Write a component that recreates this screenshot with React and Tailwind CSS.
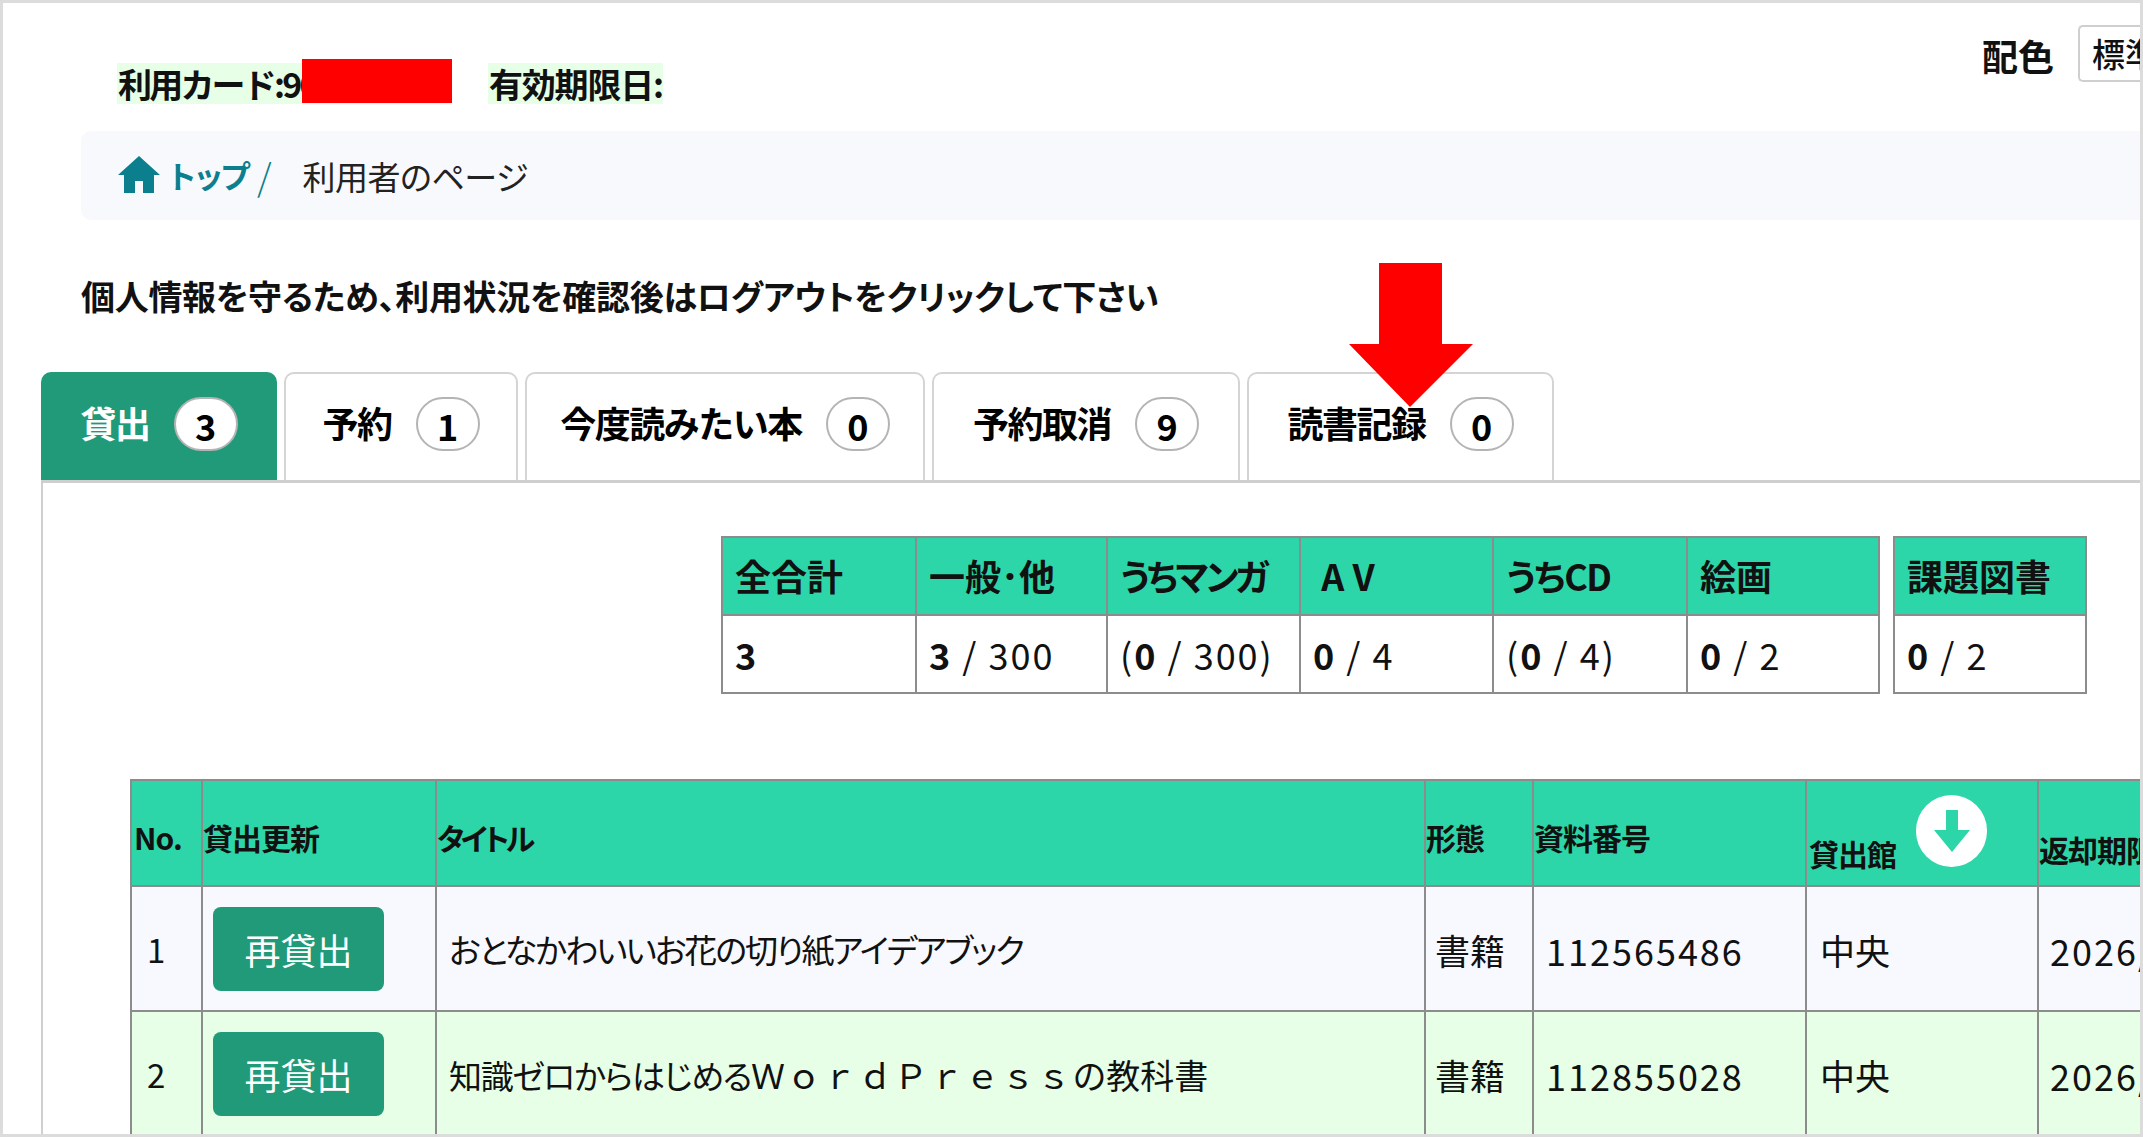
const font = { fontFamily: '"Noto Sans CJK JP", "Noto Sans", sans-serif' };

function Tab({ label, n, active, w }) {
  return (
    <div
      className={`flex h-[108px] items-center justify-center gap-[24px] rounded-t-[10px] border-[2px] border-b-0 pb-[10px] text-[36px] font-bold tracking-[-1.5px] ${w} ${
        active ? 'border-[#209a78] bg-[#209a78] text-white' : 'border-[#d4d4d4] bg-white text-black'
      }`}
    >
      <span>{label}</span>
      <span className="mt-[3px] flex h-[54px] w-[64px] items-center justify-center rounded-full border-[2px] border-[#b4b4b4] bg-white pt-[3px] text-[36px] tracking-normal text-black">
        {n}
      </span>
    </div>
  );
}

function Th({ children, w, track = 'tracking-normal' }) {
  return (
    <th className={`${w} h-[78px] border-[2px] border-[#8c8c8c] bg-[#2dd6a8] pb-[3px] pl-[12px] text-left text-[36px] font-bold [font-feature-settings:'palt'] whitespace-nowrap ${track}`}>
      {children}
    </th>
  );
}

function Td({ children }) {
  return (
    <td className="h-[78px] border-[2px] border-[#8c8c8c] bg-white pl-[12px] text-[36px] tracking-[2px] whitespace-nowrap">
      {children}
    </td>
  );
}

function MTh({ children, w, className = '' }) {
  return (
    <th className={`${w} border-[2px] border-[#8c8c8c] bg-[#2dd6a8] p-0 text-left text-[30px] font-bold tracking-[-1px] whitespace-nowrap ${className}`}>
      {children}
    </th>
  );
}

function Row({ no, title, id, bg }) {
  const td = `border-[2px] border-[#8c8c8c] ${bg} pt-[3px] whitespace-nowrap`;
  return (
    <tr className="h-[125px]">
      <td className={`${td} pl-[15px] text-[33px]`}>{no}</td>
      <td className={`${td} pl-[10px] !pt-0`}>
        <button className="flex h-[84px] w-[171px] items-center justify-center rounded-[8px] bg-[#209a78] text-[36px] text-white">再貸出</button>
      </td>
      <td className={`${td} pl-[12px] text-[33px]`}>{title}</td>
      <td className={`${td} pl-[9px] text-[35px]`}>書籍</td>
      <td className={`${td} pl-[12px] text-[36px] tracking-[2px]`}>{id}</td>
      <td className={`${td} pl-[13px] text-[35px]`}>中央</td>
      <td className={`${td} pl-[11px] text-[36px] tracking-[2px]`}>2026/03/15</td>
    </tr>
  );
}

export default function App() {
  return (
    <div style={font} className="relative h-[1137px] w-[2143px] overflow-hidden border-[3px] border-[#dcdcdc] bg-white text-[#111]">
      {/* top line */}
      <div className="relative flex h-[128px] items-start justify-between">
        <div className="flex pl-[114px] pt-[60px] text-[34px] leading-[41px] font-bold whitespace-nowrap">
          <span className="relative h-[41px] w-[335px] bg-[#e6ffe6] pl-[1px] tracking-[-2.8px]">
            利用カード:90
            <span className="absolute left-[185px] top-[-4px] h-[44px] w-[150px] bg-[#ff0000]" />
          </span>
          <span className="ml-[36px] h-[41px] w-[175px] bg-[#e6ffe6] pl-[1px] tracking-[-1.2px]">有効期限日:</span>
        </div>
        <div className="flex items-start pt-[22px]">
          <span className="mr-[24px] mt-[6px] text-[36px] leading-[48px] font-bold">配色</span>
          <div className="flex h-[57px] w-[62px] items-center overflow-hidden rounded-l-[5px] border-[2px] border-r-0 border-[#cfcfcf] pl-[12px] text-[33px] font-medium whitespace-nowrap">
            標準
          </div>
        </div>
      </div>

      {/* breadcrumb */}
      <div className="ml-[78px] flex h-[89px] items-center rounded-l-[10px] bg-[#f8f9fd] pl-[37px] text-[33px]">
        <svg width="42" height="37" viewBox="0 0 42 37" className="mr-[6px] mb-[2px]" fill="#0c7f8e">
          <path d="M21 0 L42 19 L36 19 L36 37 L25 37 L25 25 L17 25 L17 37 L6 37 L6 19 L0 19 Z" />
        </svg>
        <span className="text-[31px] font-bold tracking-[-4px] text-[#0c7f8e]">トップ</span>
        <span className="ml-[10px] text-[37px] font-light text-[#0c7f8e]">/</span>
        <span className="ml-[31px] mt-[2px] tracking-[-0.5px] [font-feature-settings:'palt'] text-[#222]">利用者のページ</span>
      </div>

      {/* notice */}
      <p className="ml-[78px] mt-[52px] text-[34px] leading-[48px] font-bold tracking-[-0.3px] [font-feature-settings:'palt'] whitespace-nowrap">
        個人情報を守るため、利用状況を確認後はログアウトをクリックして下さい
      </p>

      {/* tabs */}
      <div className="ml-[38px] mt-[55px] flex h-[108px] items-end gap-[7px] border-b-[3px] border-[#cfcfcf]">
        <Tab label="貸出" n="3" active w="w-[236px]" />
        <Tab label="予約" n="1" w="w-[234px]" />
        <Tab label="今度読みたい本" n="0" w="w-[400px]" />
        <Tab label="予約取消" n="9" w="w-[308px]" />
        <Tab label="読書記録" n="0" w="w-[307px]" />
      </div>

      {/* panel */}
      <div className="ml-[38px] h-[660px] border-l-[2px] border-[#cfcfcf]">
        <div className="flex justify-end pr-[53px] pt-[53px]">
          <table className="border-collapse">
            <thead>
              <tr>
                <Th w="w-[194px]">全合計</Th>
                <Th w="w-[191px]">一般･他</Th>
                <Th w="w-[193px]" track="tracking-[-3px]">うちマンガ</Th>
                <Th w="w-[193px]">&nbsp;A V</Th>
                <Th w="w-[194px]" track="tracking-[-1.5px]">うちCD</Th>
                <Th w="w-[192px]">絵画</Th>
              </tr>
            </thead>
            <tbody>
              <tr>
                <Td><b>3</b></Td>
                <Td><b>3</b> / 300</Td>
                <Td>(<b>0</b> / 300)</Td>
                <Td><b>0</b> / 4</Td>
                <Td>(<b>0</b> / 4)</Td>
                <Td><b>0</b> / 2</Td>
              </tr>
            </tbody>
          </table>
          <table className="ml-[13px] border-collapse">
            <thead>
              <tr>
                <Th w="w-[192px]">課題図書</Th>
              </tr>
            </thead>
            <tbody>
              <tr>
                <Td><b>0</b> / 2</Td>
              </tr>
            </tbody>
          </table>
        </div>

        <div className="ml-[87px] mt-[85px] w-[2011px] overflow-hidden">
          <table className="w-[2080px] table-fixed border-collapse">
            <thead>
              <tr className="h-[106px]">
                <MTh w="w-[71px]" className="pl-[2px] pt-[8px]">No.</MTh>
                <MTh w="w-[234px]" className="pt-[8px]">貸出更新</MTh>
                <MTh w="w-[989px]" className="pt-[8px] tracking-[-3.5px] [font-feature-settings:'palt']">タイトル</MTh>
                <MTh w="w-[108px]" className="pt-[8px]">形態</MTh>
                <MTh w="w-[273px]" className="pt-[8px]">資料番号</MTh>
                <MTh w="w-[232px]" className="pl-[2px]">
                  <div className="flex items-end">
                    <span className="leading-[36px]">貸出館</span>
                    <span className="mb-[4px] ml-[20px] flex h-[72px] w-[71px] items-center justify-center rounded-full bg-white">
                      <svg width="36" height="42" viewBox="0 0 36 42" fill="#2dd6a8">
                        <path d="M12 0 H24 V20 H36 L18 42 L0 20 H12 Z" />
                      </svg>
                    </span>
                  </div>
                </MTh>
                <MTh w="w-[173px]" className="pt-[32px]">返却期限</MTh>
              </tr>
            </thead>
            <tbody>
              <Row
                no="1"
                title={<span className="tracking-[-2px] [font-feature-settings:'palt']">おとなかわいいお花の切り紙アイデアブック</span>}
                id="112565486"
                bg="bg-[#f8f9ff]"
              />
              <Row
                no="2"
                title={
                  <>
                    <span className="tracking-[-1.3px] [font-feature-settings:'palt']">知識ゼロからはじめる</span>
                    <span className="text-[34px] tracking-[1.7px]">ＷｏｒｄＰｒｅｓｓ</span>
                    <span className="text-[34px]">の教科書</span>
                  </>
                }
                id="112855028"
                bg="bg-[#e6ffe6]"
              />
            </tbody>
          </table>
        </div>
      </div>

      {/* annotation arrow */}
      <svg width="124" height="144" viewBox="0 0 124 144" className="absolute left-[1346px] top-[260px]" fill="#ff0000">
        <path d="M30 0 H93 V81 H124 L61 144 L0 81 H30 Z" />
      </svg>
    </div>
  );
}
